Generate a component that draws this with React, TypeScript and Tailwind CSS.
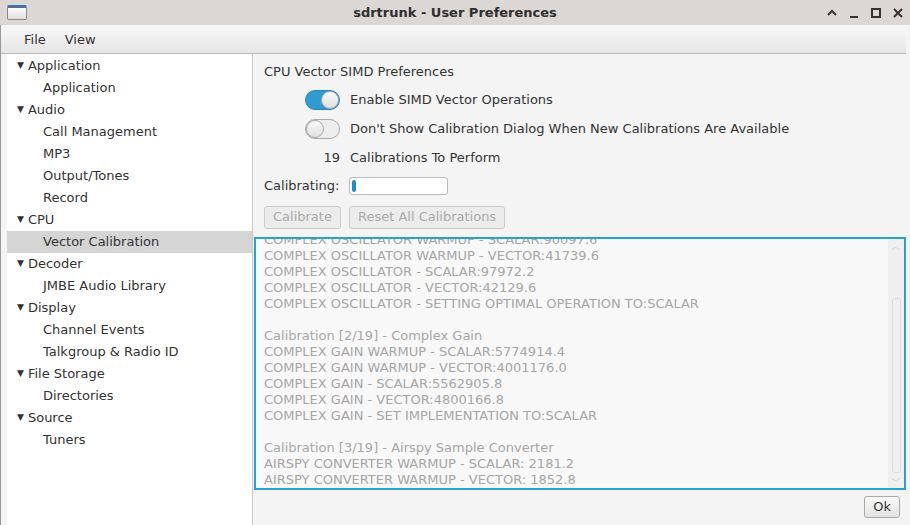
import React from "react";

const tree: [string, boolean][] = [
  ["Application", true], ["Application", false],
  ["Audio", true], ["Call Management", false], ["MP3", false], ["Output/Tones", false], ["Record", false],
  ["CPU", true], ["Vector Calibration", false],
  ["Decoder", true], ["JMBE Audio Library", false],
  ["Display", true], ["Channel Events", false], ["Talkgroup & Radio ID", false],
  ["File Storage", true], ["Directories", false],
  ["Source", true], ["Tuners", false],
];

const log = [
  "COMPLEX OSCILLATOR WARMUP - SCALAR:90097.6",
  "COMPLEX OSCILLATOR WARMUP - VECTOR:41739.6",
  "COMPLEX OSCILLATOR - SCALAR:97972.2",
  "COMPLEX OSCILLATOR - VECTOR:42129.6",
  "COMPLEX OSCILLATOR - SETTING OPTIMAL OPERATION TO:SCALAR",
  "",
  "Calibration [2/19] - Complex Gain",
  "COMPLEX GAIN WARMUP - SCALAR:5774914.4",
  "COMPLEX GAIN WARMUP - VECTOR:4001176.0",
  "COMPLEX GAIN - SCALAR:5562905.8",
  "COMPLEX GAIN - VECTOR:4800166.8",
  "COMPLEX GAIN - SET IMPLEMENTATION TO:SCALAR",
  "",
  "Calibration [3/19] - Airspy Sample Converter",
  "AIRSPY CONVERTER WARMUP - SCALAR: 2181.2",
  "AIRSPY CONVERTER WARMUP - VECTOR: 1852.8",
];

export default function App() {
  return (
    <div className="w-[910px] h-[525px] overflow-hidden bg-[#f4f4f4] text-[13px] text-[#333]" style={{ fontFamily: '"DejaVu Sans", sans-serif' }}>
      {/* title bar */}
      <div className="h-[25px] bg-[#dbd7d4] flex items-center relative">
        <div className="ml-[7px] w-[20px] h-[15px] border border-[#888] rounded-[2px] bg-gradient-to-b from-[#fff] to-[#ddd] border-t-[3px] border-t-[#4a6fa5]" />
        <div className="absolute inset-0 flex items-center justify-center font-bold text-[#2e2e2e] text-[13px]">sdrtrunk - User Preferences</div>
        <div className="ml-auto mr-[6px] flex items-center gap-[10px] text-[#333]">
          <svg width="12" height="12" viewBox="0 0 12 12"><path d="M2 8 L6 4 L10 8" stroke="#333" strokeWidth="2" fill="none" /></svg>
          <svg width="12" height="12" viewBox="0 0 12 12"><path d="M2 10 H10" stroke="#333" strokeWidth="2" /></svg>
          <svg width="12" height="12" viewBox="0 0 12 12"><rect x="2" y="2" width="8" height="8" stroke="#333" strokeWidth="2" fill="none" /></svg>
          <svg width="12" height="12" viewBox="0 0 12 12"><path d="M2 2 L10 10 M10 2 L2 10" stroke="#333" strokeWidth="2" /></svg>
        </div>
      </div>
      <div className="w-[906px] h-[500px] border-l border-[#999] flex flex-col">
        {/* menu */}
        <div className="h-[29px] shrink-0 bg-gradient-to-b from-[#f8f8f8] to-[#e6e6e6] border-b border-[#bbb] flex items-center gap-[19px] pl-[23px] pt-[2px]">
          <span>File</span><span>View</span>
        </div>
        <div className="flex flex-1 min-h-0">
          <div className="w-[246px] ml-[6px] bg-white border-r border-[#c8c8c8] pt-[1px]">
            {tree.map(([t, parent], i) => (
              <div key={i} className={`h-[22px] flex items-center ${i === 8 ? "bg-[#d5d5d5]" : ""} ${parent ? "pl-[10px]" : "pl-[36px]"}`}>
                {parent && <span className="text-[9px] mr-[4px]">▼</span>}
                <span>{t}</span>
              </div>
            ))}
          </div>
          <div className="flex-1 flex flex-col min-w-0">
            <div className="pl-[11px] pt-[8px]">
              <div className="h-[20px]">CPU Vector SIMD Preferences</div>
              <div className="flex items-center h-[29px] mt-[3px]">
                <div className="ml-[41px] w-[35px] h-[20px] rounded-full bg-[#2f9bd1] border border-[#2a86b4] relative">
                  <div className="absolute right-0 top-0 w-[18px] h-[18px] rounded-full bg-gradient-to-b from-[#fafafa] to-[#e0e0e0] border border-[#aaa]" />
                </div>
                <span className="ml-[10px]">Enable SIMD Vector Operations</span>
              </div>
              <div className="flex items-center h-[30px]">
                <div className="ml-[41px] w-[35px] h-[20px] rounded-full bg-[#eee] border border-[#aaa] relative">
                  <div className="absolute left-0 top-0 w-[18px] h-[18px] rounded-full bg-gradient-to-b from-[#fafafa] to-[#e0e0e0] border border-[#aaa]" />
                </div>
                <span className="ml-[10px]">Don't Show Calibration Dialog When New Calibrations Are Available</span>
              </div>
              <div className="flex items-center h-[27px]">
                <span className="w-[76px] text-right">19</span>
                <span className="ml-[10px]">Calibrations To Perform</span>
              </div>
              <div className="flex items-center h-[29px]">
                <span>Calibrating:</span>
                <div className="ml-[10px] w-[99px] h-[18px] border border-[#bbb] rounded-[3px] bg-white p-[2px]">
                  <div className="w-[4px] h-full bg-[#1f8fc8] rounded-[2px]" />
                </div>
              </div>
              <div className="flex items-center gap-[8px] h-[34px] text-[#aaa]">
                <div className="h-[23px] px-[8px] flex items-center border border-[#ccc] rounded-[3px] bg-[#ececec]">Calibrate</div>
                <div className="h-[23px] px-[8px] flex items-center border border-[#ccc] rounded-[3px] bg-[#ececec]">Reset All Calibrations</div>
              </div>
            </div>
            <div className="ml-[1px] mt-[3px] h-[253px] shrink-0 border-2 border-[#2aa0cf] bg-[#f8f8f8] flex overflow-hidden">
              <div className="flex-1 pl-[8px] -mt-[7px] text-[#a6a6a6] leading-[16px]">
                {log.map((l, i) => <div key={i} className="h-[16px] whitespace-nowrap">{l}</div>)}
              </div>
              <div className="w-[16px] bg-[#efefef] flex flex-col items-center text-[#ccc] text-[10px]">
                <span>︿</span>
                <div className="mt-[44px] w-[9px] h-[178px] border border-[#ddd] rounded-[3px]" />
                <span>﹀</span>
              </div>
            </div>
            <div className="flex justify-end pr-[6px] pt-[6px]">
              <div className="h-[22px] px-[8px] flex items-center border border-[#aaa] rounded-[3px] bg-gradient-to-b from-[#fafafa] to-[#e2e2e2]">Ok</div>
            </div>
          </div>
        </div>
      </div>
    </div>
  );
}
